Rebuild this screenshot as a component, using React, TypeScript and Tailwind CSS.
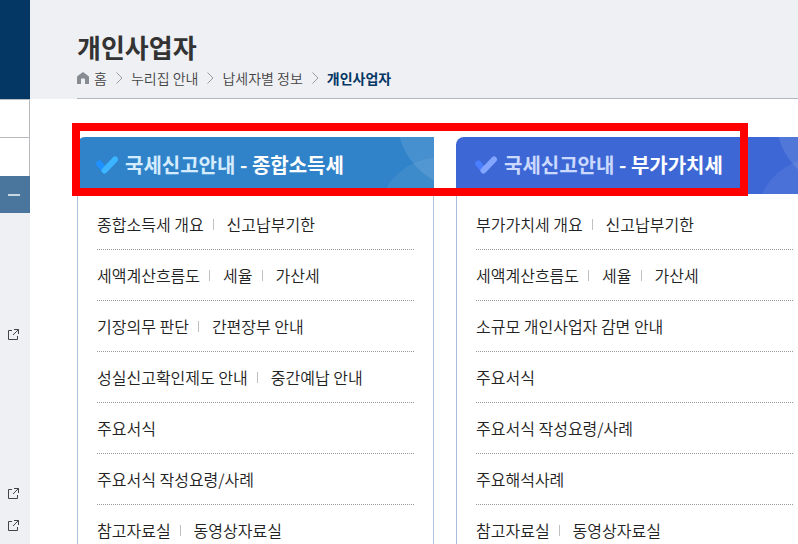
type Theme = {
  header: string;
  border: string;
  label: string;
  shortStroke: string;
  longStroke: string;
};

type Card = {
  name: string;
  theme: Theme;
  rows: string[][];
};

const cards: Card[] = [
  {
    name: '종합소득세',
    theme: {
      header: 'bg-[#3083c9]',
      border: 'border-[#abc3dd]',
      label: 'text-[#d5ecff]',
      shortStroke: '#1e90ff',
      longStroke: '#3cb4ff',
    },
    rows: [
      ['종합소득세 개요', '신고납부기한'],
      ['세액계산흐름도', '세율', '가산세'],
      ['기장의무 판단', '간편장부 안내'],
      ['성실신고확인제도 안내', '중간예납 안내'],
      ['주요서식'],
      ['주요서식 작성요령/사례'],
      ['참고자료실', '동영상자료실'],
    ],
  },
  {
    name: '부가가치세',
    theme: {
      header: 'bg-[#3c67d5]',
      border: 'border-[#abbce0]',
      label: 'text-[#cbd9ff]',
      shortStroke: '#4a7dff',
      longStroke: '#82a5ff',
    },
    rows: [
      ['부가가치세 개요', '신고납부기한'],
      ['세액계산흐름도', '세율', '가산세'],
      ['소규모 개인사업자 감면 안내'],
      ['주요서식'],
      ['주요서식 작성요령/사례'],
      ['주요해석사례'],
      ['참고자료실', '동영상자료실'],
    ],
  },
];

function ExternalIcon() {
  return (
    <svg width="12" height="12" viewBox="0 0 12 12" fill="none" stroke="#444" strokeWidth="1">
      <path d="M4 1.5H0.5V10.5H9.5V7M6 0.5H10.5V5M10.5 0.5L5 6" />
    </svg>
  );
}

function Sidebar() {
  return (
    <aside className="flex w-[30px] shrink-0 flex-col bg-[#eff0f4]">
      <div className="h-[99px] bg-[#043764]" />
      <div className="h-[39px] border-y border-r border-[#b8babd] bg-white" />
      <div className="h-[38px] border-r border-[#b8babd] bg-white" />
      <button type="button" aria-label="메뉴 접기" className="flex h-[37px] items-center justify-end bg-[#4a759c] pr-[10px]">
        <span className="h-[2px] w-3 bg-[#c8d6e2]" />
      </button>
      <nav className="flex flex-col items-start pt-[116px] pl-2">
        <a href="#" aria-label="새 창" className="mb-[147px]"><ExternalIcon /></a>
        <a href="#" aria-label="새 창" className="mb-5"><ExternalIcon /></a>
        <a href="#" aria-label="새 창"><ExternalIcon /></a>
      </nav>
    </aside>
  );
}

function Separator() {
  return (
    <svg width="8" height="12" viewBox="0 0 8 12" className="mx-2" fill="none" stroke="#999ca1" strokeWidth="1" aria-hidden="true">
      <path d="M1.5 0.5L7 6L1.5 11.5" />
    </svg>
  );
}

function PageHeader() {
  return (
    <header className="h-[99px] bg-[#eff0f4] pl-[47px]">
      <div className="flex h-full flex-col border-b border-[#b1b6c1] pt-7">
        <h1 className="text-[26px] leading-[38px] font-bold text-[#333]">개인사업자</h1>
        <nav className="flex h-6 items-center text-sm font-[350] text-[#444]">
          <svg width="12" height="12" viewBox="0 0 12 12" className="mr-[5px]" fill="#868c92" aria-hidden="true">
            <path d="M6 0L11.4 4.1Q12 4.6 12 5.4V12H8V7.5Q8 6.5 7 6.5H5Q4 6.5 4 7.5V12H0V5.4Q0 4.6 0.6 4.1Z" />
          </svg>
          <a href="#">홈</a>
          <Separator />
          <a href="#">누리집 안내</a>
          <Separator />
          <a href="#">납세자별 정보</a>
          <Separator />
          <a href="#" className="font-bold text-[#043764]">개인사업자</a>
        </nav>
      </div>
    </header>
  );
}

function TaxCard({ name, theme, rows }: Card) {
  return (
    <section>
      <div className={`relative flex h-[57px] items-center overflow-hidden rounded-tl-lg pb-0.5 pl-[19px] ${theme.header}`}>
        <svg width="60" height="57" viewBox="0 0 60 57" fill="#fff" className="absolute top-0 right-0" aria-hidden="true">
          <circle cx="92" cy="-17.5" r="68.6" fillOpacity="0.11" />
          <circle cx="66" cy="83" r="62.5" fillOpacity="0.07" />
        </svg>
        <svg width="22" height="18" viewBox="0 0 22 18" fill="none" strokeWidth="6" strokeLinecap="round" className="mr-[7px]" aria-hidden="true">
          <path d="M3.2 7.5L8.5 14" stroke={theme.shortStroke} />
          <path d="M8.5 14.5L19 3.5" stroke={theme.longStroke} />
        </svg>
        <h2 className="text-xl font-bold text-white">
          <span className={theme.label}>국세신고안내</span> - {name}
        </h2>
      </div>
      <ul className={`border-x px-[19px] pt-[5px] ${theme.border}`}>
        {rows.map((row, i) => (
          <li key={i} className="flex h-[51px] items-center border-b border-dotted border-[#999]">
            {row.map((item, j) => (
              <span key={item} className="flex items-center">
                {j > 0 && <span className="mr-[13px] ml-[9px] h-[11px] w-px bg-[#c0c0c0]" />}
                <a href="#" className="text-base leading-6 font-[350] whitespace-nowrap text-[#222]">{item}</a>
              </span>
            ))}
          </li>
        ))}
      </ul>
    </section>
  );
}

export default function App() {
  return (
    <div className="flex h-screen overflow-hidden bg-white font-['Noto_Sans_CJK_KR',sans-serif]">
      <Sidebar />
      <div className="min-w-0 flex-1">
        <PageHeader />
        <main className="relative -mr-[15px] pt-[38px] pl-[47px]">
          <div className="grid grid-cols-2 gap-[22px]">
            {cards.map((card) => (
              <TaxCard key={card.name} {...card} />
            ))}
          </div>
          <div className="pointer-events-none absolute top-6 left-[42px] h-[73px] w-[676px] border-8 border-[#ff0000]" />
        </main>
      </div>
    </div>
  );
}
